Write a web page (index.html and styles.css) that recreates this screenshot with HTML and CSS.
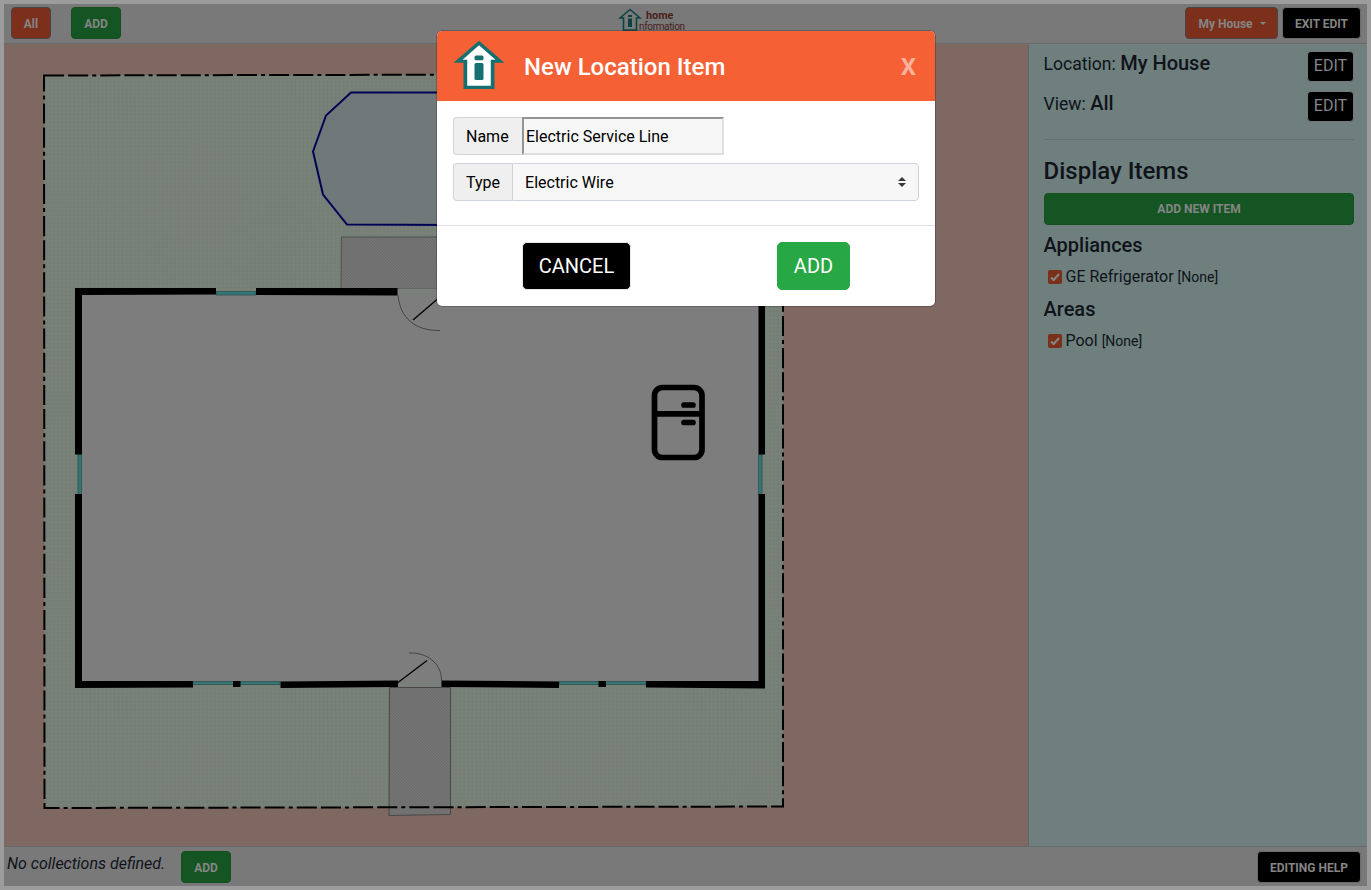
FILE: index.html
```
<!DOCTYPE html>
<html lang="en">
<head>
<meta charset="utf-8">
<title>Home Information</title>
<link rel="stylesheet" href="styles.css">
</head>
<body>
<div class="app">
  <header class="topbar">
    <button class="btn btn-view">All</button>
    <button class="btn btn-add">ADD</button>
    <div class="brand">
      <svg class="brand-icon" width="24" height="24" viewBox="0 0 24 24"><path d="M12 1.5 L22 10 H18.5 V22 H5.500 V10 H2 Z" fill="none" stroke="#0c4342" stroke-width="1.6"/><path d="M10 7h4v2h-4zM10 10.500h4v8.500h-4z" fill="#0c4342"/></svg>
      <div class="brand-text"><b>home</b><span>nformation</span></div>
    </div>
    <button class="btn btn-house">My House<i class="caret"></i></button>
    <button class="btn btn-black">EXIT EDIT</button>
  </header>
  <main class="content">
    <section class="plan">
      <svg width="1024" height="802" viewBox="4 44 1024 802">
        <defs>
          <pattern id="grass" width="4.020" height="4.020" patternUnits="userSpaceOnUse"><rect width="4.020" height="4.020" fill="#798079"/><circle cx="2" cy="2" r=".9" fill="#69806b"/></pattern>
          <pattern id="hatch" width="2.200" height="2.200" patternUnits="userSpaceOnUse" patternTransform="rotate(-45)"><rect width="2.200" height="2.200" fill="#757575"/><rect width=".8" height="2.200" fill="#6a6a6a"/></pattern>
        </defs>
        <path d="M44 75.500 L783 74 L783 806.500 L44.500 808 Z" fill="url(#grass)"/>
        <path d="M351 92.500 H560 V225.500 L347 224.500 L323 194.500 L313 151.500 L326 115.500 Z" fill="#6e757a" fill-opacity=".75" stroke="#020257" stroke-width="2"/>
        <path d="M341.500 237 H500 V288.500 H341 Z" fill="url(#hatch)" stroke="#505050"/>
        <path d="M80 294 H761 V682 H80 Z" fill="#7d7d7d"/>
        <path d="M398 288.500 H441 V296 H398 Z M398 681 H441 V687 H398 Z" fill="#7b7f7b"/>
        <path d="M389.500 687.500 H450.500 V814.500 L389 815.500 Z" fill="url(#hatch)" stroke="#484848"/>
        <path d="M44 75.500 L783 74 L783 806.500 L44.500 808 Z" fill="none" stroke="#000" stroke-width="2" stroke-dasharray="20.100 4.020 20.100 4.020 4.020 4.020"/>
        <g fill="#357574" stroke="#2a5251" stroke-width=".8">
          <path d="M216 291.500h40v3.500h-40zM193 681.500h87v3h-87zM559 681.500h87v3h-87zM78 454.500h3.500v40h-3.500zM758.500 454.500h3.500v40h-3.500z"/>
        </g>
        <path d="M75 288H216V294.500L82 295V454.500H75Z M256 288H397.500V295.500L256 295Z M75 494H82V681H193V687.500L75 688Z M233 681h7.500v6h-7.500Z M280.500 681.500L398 680.500V687L280.500 688Z M441.500 680.500L559 681.500V688L441.500 687Z M598.500 681h7.500v6h-7.500Z M646 681H758.500V494H765V688.500L646 687.500Z M758.500 288H765V454.500H758.500Z M441 288H760V295H441Z" fill="#000"/>
        <g fill="none" stroke="#444" stroke-width="1">
          <path d="M398 295 C400 318 415 331 440 330.500"/><path d="M409 653 C426 652 442 663 441.500 681"/>
        </g>
        <path d="M413 320 L441 296 M398 682.500 L427 660.500" fill="none" stroke="#000" stroke-width="1.300"/>
        <g fill="none" stroke="#000" stroke-width="5.700">
          <rect x="654.500" y="387.500" width="47.500" height="70" rx="8"/><path d="M654 413.800H702"/>
          <path d="M684 405H693M684 422.500H693" stroke-linecap="round"/>
        </g>
      </svg>
    </section>
    <aside class="side">
      <div class="row"><div class="label">Location: <b>My House</b></div><button class="btn-edit">EDIT</button></div>
      <div class="row"><div class="label">View: <b>All</b></div><button class="btn-edit">EDIT</button></div>
      <div class="rule"></div>
      <h2>Display Items</h2>
      <button class="btn btn-add btn-wide">ADD NEW ITEM</button>
      <h3>Appliances</h3>
      <div class="item"><span class="check"><svg width="14" height="14" viewBox="0 0 14 14"><path d="M3 7.500 L5.700 10 L11 4" fill="none" stroke="#858585" stroke-width="2"/></svg></span>GE Refrigerator<small>[None]</small></div>
      <h3>Areas</h3>
      <div class="item"><span class="check"><svg width="14" height="14" viewBox="0 0 14 14"><path d="M3 7.500 L5.700 10 L11 4" fill="none" stroke="#858585" stroke-width="2"/></svg></span>Pool<small>[None]</small></div>
    </aside>
  </main>
  <footer class="bottombar">
    <em>No collections defined.</em>
    <button class="btn btn-add">ADD</button>
    <button class="btn btn-black btn-help">EDITING HELP</button>
  </footer>
</div>
<div class="modal">
  <div class="modal-head">
    <svg width="52" height="50" viewBox="0 0 52 50"><path d="M26 .8 L51.500 22.800 H41.500 V49 H10.500 V22.800 H.5 Z" fill="#167070"/><path d="M26 5.200 L42.500 19.800 H37.800 V45.700 H14.200 V19.800 H9.500 Z" fill="#fff"/><rect x="21.500" y="15.500" width="9" height="4.700" rx="1.500" fill="#167070"/><rect x="21.500" y="23" width="9" height="17" rx="1.500" fill="#167070"/></svg>
    <div class="title">New Location Item</div>
    <div class="close">X</div>
  </div>
  <div class="modal-body">
    <div class="field"><label class="addon addon-name">Name</label><div class="input">Electric Service Line</div></div>
    <div class="field"><label class="addon">Type</label><div class="select">Electric Wire<svg width="8" height="10" viewBox="0 0 8 10"><path d="M0 4 L4 0 L8 4 Z M0 6 L4 10 L8 6 Z" fill="#343a40"/></svg></div></div>
  </div>
  <div class="modal-foot">
    <button class="big big-cancel">CANCEL</button>
    <button class="big big-add">ADD</button>
  </div>
</div>
</body>
</html>
```
FILE: styles.css
```
* { box-sizing: border-box; }
body { margin: 0; height: 890px; overflow: hidden; background: #9c9c9c; color: #10131a; font-family: Roboto, sans-serif; font-size: 16px; line-height: 24px; }
button { margin: 0; padding: 0; font-family: inherit; }
.app { height: 890px; padding: 4px; display: flex; flex-direction: column; }
.topbar { height: 40px; display: flex; align-items: flex-start; padding: 3px 6px 0 7px; background: #797979; border-bottom: 1px solid #656b6b; }
.btn { height: 32px; padding-top: 2px; border: 1px solid #154f20; border-radius: 4px; font-size: 12px; font-weight: 700; line-height: 18px; color: #858585; background: #155523; }
.btn-add { width: 50px; }
.topbar .btn-add { margin-left: 20px; }
.btn-view, .btn-house { background: #7c301c; border-color: #484444; }
.btn-view { width: 40px; }
.btn-house { width: 93px; padding-left: 1px; }
.caret { display: inline-block; margin-left: 7px; vertical-align: 3px; border: 3.500px solid transparent; border-top-color: #858585; border-bottom: 0; }
.btn-black { width: 79px; margin-left: 4px; background: #000; border-color: #6c6c6c; }
.brand { display: flex; margin: 0 auto 0 497px; padding-top: 1px; height: 28px; }
.brand-text { color: #4a211a; font-size: 11px; line-height: 10px; padding-top: 3px; display: flex; flex-direction: column; }
.brand-text b { margin-left: 4px; height: 11px; font-size: 10.800px; }
.brand-text span { margin-left: -3px; font-size: 10px; letter-spacing: -.35px; }
.content { height: 802px; display: flex; }
.plan { width: 1024px; background: #806862; }
.plan svg { display: block; }
.side { flex: 1; padding: 7px 13px 0 15px; background: #6e7f7e; border-left: 1px solid #60696a; }
.row { height: 40px; display: flex; justify-content: space-between; align-items: flex-start; }
.label { font-size: 17.600px; line-height: 24px; margin-left: -.5px; }
.label b { font-size: 20px; font-weight: 500; }
.btn-edit { width: 47px; height: 31px; padding-bottom: 1px; background: #000; border: 1px solid #737979; border-radius: 4px; font-size: 16px; color: #858585; line-height: 24px; }
.rule { height: 1px; margin-top: 8px; background: #5f6f6e; }
.side h2 { margin: 16px 0 7px -.5px; font-size: 24px; font-weight: 500; line-height: 30px; }
.btn-wide { width: 310px; padding-top: 0; display: block; }
.side h3 { margin: 8px 0 8px -.5px; font-size: 20px; font-weight: 500; line-height: 24px; }
.item { display: flex; align-items: center; height: 24px; padding-left: 4px; }
.check { width: 14px; height: 14px; margin: 0 3.500px 0 0; background: #7b301a; border-radius: 2px; }
.check svg { display: block; }
.item small { font-size: 14px; margin: 0 0 0 4px; }
.bottombar { height: 40px; display: flex; border-top: 1px solid #656b6b; padding: 4px 6px 0 3px; background: #797979; }
.bottombar em { width: 174px; padding-top: 1px; font-size: 16px; }
.bottombar .btn-help { width: 104px; margin-left: auto; }
.modal { position: absolute; left: 437px; top: 31px; width: 498px; height: 275px; background: #fff; border-radius: 5px; overflow: hidden; box-shadow: 0 0 0 1px rgba(0,0,0,.2); color: #000; }
.modal-head { height: 70px; background: #f66035; display: flex; align-items: center; padding: 0 19px 0 16px; color: #fff; }
.modal-head svg { margin-bottom: 2px; }
.title { margin: 2px auto 0 19px; font-size: 24px; font-weight: 500; }
.close { font-size: 24px; font-weight: 700; color: #fab09a; margin-top: 2px; }
.modal-body { height: 125px; padding: 16px; display: flex; flex-direction: column; gap: 8px; border-bottom: 1px solid #dee2e6; }
.field { display: flex; height: 38px; }
.addon { padding: 7px 12px 5px; background: #efefef; border: 1px solid #ced4da; border-radius: 4px 0 0 4px; border-right: 0; }
.addon-name { width: 69px; }
.input { width: 202px; padding: 6px 2px 4px; background: #f7f7f7; border: 2px solid #dfdfdf; border-top-color: #949494; border-left-color: #949494; }
.select { flex: 1; display: flex; justify-content: space-between; align-items: center; padding: 2px 12px 0; background: #f7f7f7; border: 1px solid #ced4da; border-radius: 0 4px 4px 0; }
.select svg { margin-bottom: 2px; }
.modal-foot { height: 80px; display: flex; justify-content: space-between; padding: 16px 85px 0; }
.big { height: 48px; border: 1px solid #28a745; border-radius: 5px; font-size: 20px; color: #fff; }
.big-cancel { width: 109px; background: #000; border-color: #e8e8e8; }
.big-add { width: 73px; background: #28a745; }
```
